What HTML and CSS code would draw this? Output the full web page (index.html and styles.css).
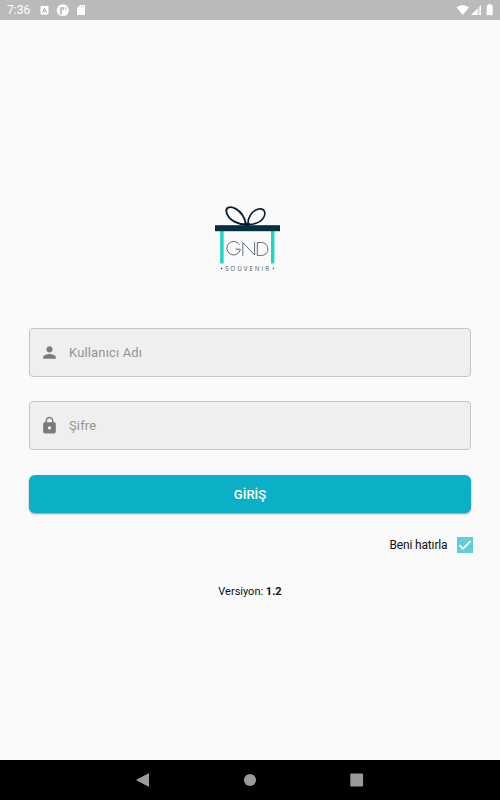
FILE: index.html
```html
<!DOCTYPE html>
<html lang="tr">
<head>
    <meta charset="UTF-8">
    <meta name="viewport" content="width=device-width, initial-scale=1.0">
    <title>GND Souvenir - Giriş</title>
    <link rel="stylesheet" href="styles.css">
</head>
<body>
    <header class="status-bar">
        <span class="clock">7:36</span>
        <svg class="status-left" width="50" height="20" viewBox="0 0 50 20">
            <rect x="1.5" y="6" width="8" height="8.5" rx="1" fill="#fff"/>
            <path d="M3.7 12.6 5.5 8l1.8 4.6M4.3 11.2h2.4" fill="none" stroke="#aaa" stroke-width="1"/>
            <circle cx="23.8" cy="10.2" r="6" fill="#fff"/>
            <path d="M20.8 7h4.2v3h-2v4.5h-2.2zM26 7h1.3v3H26z" fill="#c4c4c4"/>
            <path d="M41 5h5v10h-8V8z" fill="#fff"/>
            <path d="M41 6.3v1.5M42.8 6.3v1.5M44.5 6.3v1.5" stroke="#bbb" stroke-width=".7"/>
        </svg>
        <svg class="status-right" width="40" height="20" viewBox="0 0 40 20">
            <path d="M.5 7.6Q6.8 2.4 13.1 7.6L6.8 15z" fill="#fff"/>
            <path d="M25 5v10H15z" fill="#fff" opacity=".5"/>
            <path d="M21.3 8.7V15H15zM23.4 12H25v3h-1.6zM23.8 5.8H25V11h-1.2z" fill="#fff"/>
            <path d="M32.2 4.3h3v1h1.5v10h-6v-10h1.5z" fill="#fff"/>
        </svg>
    </header>

    <main class="login">
        <svg class="logo" width="70" height="70" viewBox="0 0 70 70">
            <g fill="none" stroke="#061d30">
                <path d="M36 24.5C28 24.5 19.5 20.5 16.8 13.5 14.8 7 19.5 5.8 25.5 8.6 31.5 12 35 18.5 36 24.5Z" stroke-width="1.9"/>
                <path d="M38 24.5C37.5 17.5 42 10.5 48.5 9 55 8 56.5 13.5 53 18.5 49.5 23 44 24.5 38 24.5Z" stroke-width="1.6"/>
            </g>
            <rect x="34" y="23" width="6" height="3" fill="#061d30"/>
            <rect x="10.2" y="30" width="3.4" height="33.5" fill="#18d8c5"/>
            <rect x="61" y="30" width="3.4" height="33.5" fill="#18d8c5"/>
            <rect x="5" y="25.2" width="65" height="6" fill="#06303f"/>
            <g fill="none" stroke="#384a55" stroke-width=".8">
                <path d="M29.5 44.7A6.8 6.8 0 1 0 30.2 50v-.8h-4.7"/>
                <path d="M32.8 55.8V42.5L44.6 55V42.2"/>
                <path d="M47.3 42.5v13h3.4c4.8 0 7.1-2.6 7.1-6.5s-2.3-6.5-7.1-6.5z"/>
            </g>
            <circle cx="11.6" cy="68.5" r=".8" fill="#173a4b"/>
            <circle cx="63.5" cy="68.5" r=".7" fill="#173a4b"/>
        </svg>
        <div class="logo-name">SOUVENIR</div>

        <form class="login-form">
            <label class="field">
                <svg width="19" height="19" viewBox="0 0 24 24" fill="#7b7b7b">
                    <path d="M12 12c2.21 0 4-1.79 4-4s-1.79-4-4-4-4 1.79-4 4 1.79 4 4 4zm0 2c-2.67 0-8 1.34-8 4v2h16v-2c0-2.66-5.33-4-8-4z"/>
                </svg>
                <input type="text" placeholder="Kullanıcı Adı">
            </label>
            <label class="field">
                <svg width="19" height="19" viewBox="0 0 24 24" fill="#7b7b7b">
                    <path d="M18 8h-1V6c0-2.76-2.24-5-5-5S7 3.24 7 6v2H6c-1.1 0-2 .9-2 2v10c0 1.1.9 2 2 2h12c1.1 0 2-.9 2-2V10c0-1.1-.9-2-2-2zm-6 9c-1.1 0-2-.9-2-2s.9-2 2-2 2 .9 2 2-.9 2-2 2zm3.1-9H8.9V6c0-1.71 1.39-3.1 3.1-3.1 1.71 0 3.1 1.39 3.1 3.1v2z"/>
                </svg>
                <input type="password" placeholder="Şifre">
            </label>
            <button class="login-button" type="button">GİRİŞ</button>
            <div class="remember">
                <span>Beni hatırla</span>
                <svg width="16" height="16" viewBox="0 0 16 16">
                    <rect width="16" height="16" fill="#64ced8"/>
                    <path d="M2.4 8.2 6 11.7 13.6 4.1" fill="none" stroke="#fff" stroke-width="1.7"/>
                </svg>
            </div>
        </form>

        <p class="version">Versiyon: <b>1.2</b></p>
    </main>

    <nav class="nav-bar">
        <svg width="14" height="14" viewBox="0 0 14 14"><path d="M12.5.8v12.4L.8 7z" fill="#9a9a9a" stroke="#9a9a9a" stroke-linejoin="round"/></svg>
        <svg width="14" height="14" viewBox="0 0 14 14"><circle cx="7" cy="7" r="6.1" fill="#9a9a9a"/></svg>
        <svg width="14" height="14" viewBox="0 0 14 14"><rect x=".3" y=".5" width="12.8" height="13" rx="1" fill="#9a9a9a"/></svg>
    </nav>
</body>
</html>
```

FILE: styles.css
```css
* {
    box-sizing: border-box;
}
body {
    display: flex;
    flex-direction: column;
    height: 800px;
    margin: 0;
    background: #fafafa;
    color: #111;
    font-family: Roboto, sans-serif;
    font-size: 12px;
}
.status-bar {
    display: flex;
    align-items: center;
    height: 20px;
    padding: 0 4px 0 7px;
    background: #bababa;
    color: #fff;
}
.clock {
    width: 32px;
    font-size: 12px;
    line-height: 20px;
}
.status-right {
    margin-left: auto;
}
.login {
    display: flex;
    flex: 1;
    flex-direction: column;
    align-items: center;
    padding: 180px 29px 0;
}
.logo {
    display: block;
    margin-right: 10px;
    overflow: visible;
}
.logo-name {
    height: 8px;
    margin: -5px 4px 0 0;
    color: #4c5860;
    font-family: "Open Sans", sans-serif;
    font-size: 6.3px;
    line-height: 8px;
    letter-spacing: 1.95px;
}
.login-form {
    width: 442px;
    margin-top: 55px;
}
.field {
    display: flex;
    align-items: center;
    height: 49px;
    margin-bottom: 24px;
    padding: 0 10px 0 9.5px;
    border: 1px solid #c5c5c5;
    border-radius: 4px;
    background: #efefef;
}
.field input {
    flex: 1;
    margin-left: 10.5px;
    padding: 0;
    border: 0;
    outline: 0;
    background: transparent;
    font: 13px Roboto, sans-serif;
    letter-spacing: 0.15px;
}
.field input::placeholder {
    color: #949494;
}
.login-button {
    display: block;
    width: 100%;
    height: 38px;
    margin-top: 25px;
    padding: 0;
    border: 0;
    border-radius: 6px;
    background: #0bb0c6;
    box-shadow: 0 1px 2px rgba(0, 0, 0, 0.4);
    color: #fff;
    font: 500 13px Roboto, sans-serif;
}
.remember {
    display: flex;
    align-items: center;
    justify-content: flex-end;
    gap: 9px;
    height: 16px;
    margin: 24px -1.5px 0 0;
    font-size: 12px;
    letter-spacing: -0.15px;
}
.version {
    margin: 32px 0 0;
    font-size: 11px;
    line-height: 14px;
}
.nav-bar {
    display: flex;
    align-items: center;
    justify-content: center;
    gap: 93px;
    height: 40px;
    background: #000;
}
```
